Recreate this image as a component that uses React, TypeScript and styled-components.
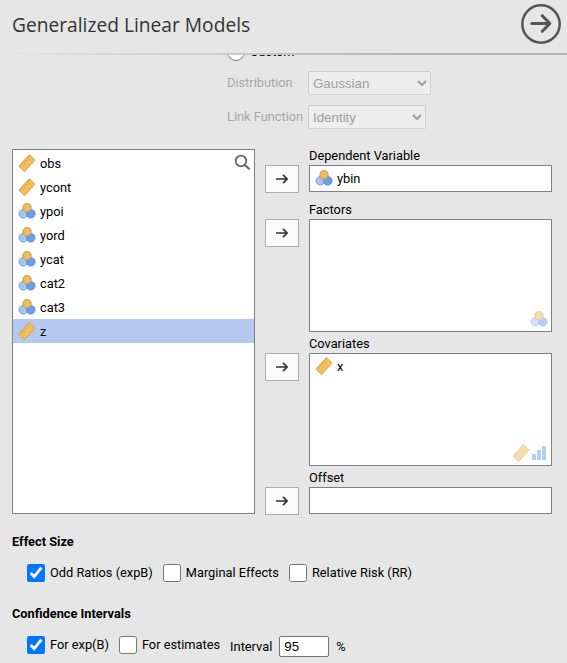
import React from 'react';
import styled, { createGlobalStyle } from 'styled-components';

const GlobalStyle = createGlobalStyle`
  *, *::before, *::after { box-sizing: border-box; }
  body {
    margin: 0;
    background: #e6e6e6;
    color: #000;
    font: 12.8px/16px Roboto, sans-serif;
    overflow: hidden;
  }
`;

const Panel = styled.main`
  width: 567px;
  height: 663px;
  display: flex;
  flex-direction: column;
  overflow: hidden;
  background: #e6e6e6;
`;

const Header = styled.header`
  flex: none;
  height: 53px;
  padding: 0 6px 0 12px;
  display: flex;
  justify-content: space-between;
`;

const Title = styled.h1`
  margin: 11px 0 0;
  font: 400 19.2px/27px 'Open Sans', sans-serif;
  color: #333;
`;

const CloseButton = styled.button`
  margin: 4px 0 0;
  width: 40px;
  height: 40px;
  padding: 0;
  border: 0;
  background: none;
  svg { display: block; }
`;

const Rule = styled.div`
  flex: none;
  height: 2px;
  background: linear-gradient(to right, #e6e6e6 0, #b3b3b3 75%, #b3b3b3 100%);
`;

const Body = styled.div`
  flex: 1;
  min-height: 0;
  overflow: hidden;
  display: flex;
  flex-direction: column;
`;

const ModelOptions = styled.section`
  flex: none;
  height: 94px;
  margin-left: 227px;
  display: flex;
  flex-direction: column;
`;

const CustomOption = styled.label`
  flex: none;
  display: flex;
  gap: 5px;
  height: 18px;
  margin-top: -12px;
  line-height: 18px;
  input { width: 18px; height: 18px; margin: 0; }
`;

const SelectRow = styled.div<{ $top: number }>`
  display: grid;
  grid-template-columns: 81px auto;
  justify-content: start;
  align-items: center;
  height: 24px;
  margin-top: ${p => p.$top}px;
  color: #a8a8a8;
`;

const Select = styled.select<{ $width: number }>`
  width: ${p => p.$width}px;
  height: 24px;
  font: 13.333px 'Liberation Sans', Arial, sans-serif;
`;

const Supplier = styled.section`
  flex: none;
  display: grid;
  grid-template-columns: 243px 297px;
  height: 365px;
  margin-left: 12px;
  & > :last-child { padding-left: 10px; }
`;

const box = `
  background: #fff;
  border: 1px solid #808080;
`;

const VariableList = styled.div`
  ${box}
  display: grid;
  grid-template-columns: 1fr;
  align-content: start;
  padding-top: 1px;
  position: relative;
`;

const SearchIcon = styled.svg`
  position: absolute;
  right: 3px;
  top: 4px;
`;

const Item = styled.div<{ $selected?: boolean }>`
  display: flex;
  align-items: center;
  gap: 4px;
  height: 24px;
  padding-left: 5px;
  background: ${p => (p.$selected ? '#b3c9f0' : 'transparent')};
`;

const ItemName = styled.span`
  padding-top: 2px;
`;

const Targets = styled.div`
  display: flex;
  flex-direction: column;
  justify-content: space-between;
`;

const Target = styled.div<{ $height: number; $gap: number }>`
  display: grid;
  grid-template-columns: 34px 243px;
  grid-template-rows: 16px ${p => p.$height}px;
  column-gap: 10px;
  margin-bottom: ${p => p.$gap}px;
`;

const TargetLabel = styled.div`
  grid-column: 2;
  line-height: 14px;
`;

const TargetButton = styled.button`
  width: 34px;
  height: 28px;
  padding: 0;
  display: grid;
  place-items: center;
  border: 1px solid #acacac;
  background: #fafafa;
`;

const TargetBox = styled.div`
  ${box}
  position: relative;
`;

const Permitted = styled.div`
  position: absolute;
  right: 3px;
  bottom: 2px;
  display: flex;
  opacity: 0.5;
`;

const Heading = styled.h2<{ $top: number }>`
  margin: ${p => p.$top}px 0 0 12px;
  flex: none;
  font-size: 12.8px;
  font-weight: 700;
  line-height: 16px;
`;

const Options = styled.div`
  flex: none;
  display: flex;
  align-items: center;
  height: 22px;
  margin: 12px 0 0 27px;
`;

const Check = styled.label`
  display: flex;
  align-items: center;
  gap: 5px;
  margin-right: 10px;
  white-space: nowrap;
  input { width: 18px; height: 18px; margin: 0; }
`;

const Interval = styled.label`
  display: flex;
  align-items: center;
  gap: 7px;
  padding-top: 3px;
  input {
    width: 50px;
    height: 21px;
    margin: 0;
    padding: 0 4px;
    border: 1px solid #767676;
    border-radius: 2px;
    background: #fff;
    font: 13.333px 'Liberation Sans', Arial, sans-serif;
  }
`;

const Ruler = () => (
  <svg width="18" height="20" viewBox="0 0 18 20">
    <path d="M11.4 1.6 17 7.2 6.4 18.6 1.1 13Z" fill="#f3bf61" stroke="#dda038" strokeLinejoin="round" />
    <path d="m3.2 10.8 1.6 1.6M5.1 8.7l2.4 2.4M7.1 6.5l1.6 1.6M9.1 4.3l2.4 2.4" stroke="#d99b34" fill="none" />
  </svg>
);

const Nominal = () => (
  <svg width="18" height="20" viewBox="0 0 18 20">
    <circle cx="5.3" cy="12.8" r="4.3" fill="#a7c4f3" stroke="#74a3ea" />
    <circle cx="12.8" cy="12.8" r="4.3" fill="#6a9eec" stroke="#5a91e4" />
    <circle cx="9" cy="6.7" r="4.1" fill="#f0bc62" stroke="#d29a3e" />
  </svg>
);

const Bars = () => (
  <svg width="18" height="20" viewBox="0 0 18 20">
    <path d="M2 11h4v6H2zM7 7h4v10H7zM12 3h4v14h-4z" fill="#6a9eec" />
  </svg>
);

const Arrow = () => (
  <svg width="14" height="12" viewBox="0 0 14 12">
    <path d="M1 6h11M8 1.8 12.1 6 8 10.2" fill="none" stroke="#333" strokeWidth="1.7" />
  </svg>
);

type Kind = 'scale' | 'nominal';

const Variable = ({ name, kind, selected }: { name: string; kind: Kind; selected?: boolean }) => (
  <Item $selected={selected}>
    {kind === 'scale' ? <Ruler /> : <Nominal />}
    <ItemName>{name}</ItemName>
  </Item>
);

const variables: { name: string; kind: Kind }[] = [
  { name: 'obs', kind: 'scale' },
  { name: 'ycont', kind: 'scale' },
  { name: 'ypoi', kind: 'nominal' },
  { name: 'yord', kind: 'nominal' },
  { name: 'ycat', kind: 'nominal' },
  { name: 'cat2', kind: 'nominal' },
  { name: 'cat3', kind: 'nominal' },
  { name: 'z', kind: 'scale' },
];

const TargetField = ({ label, height, gap, children }: {
  label: string; height: number; gap: number; children?: React.ReactNode;
}) => (
  <Target $height={height} $gap={gap}>
    <TargetLabel>{label}</TargetLabel>
    <TargetButton aria-label={`Move to ${label}`}><Arrow /></TargetButton>
    <TargetBox>{children}</TargetBox>
  </Target>
);

const CheckOption = ({ label, checked = false }: { label: string; checked?: boolean }) => (
  <Check><input type="checkbox" defaultChecked={checked} />{label}</Check>
);

export default function App() {
  return (
    <>
      <GlobalStyle />
      <Panel>
        <Header>
          <Title>Generalized Linear Models</Title>
          <CloseButton aria-label="Close options">
            <svg width="40" height="40" viewBox="0 0 40 40" fill="none" stroke="#555">
              <circle cx="20" cy="20" r="18.7" strokeWidth="2.5" />
              <path d="M10.8 19.5h17.8M21.3 11.7l7.6 7.8-7.6 7.8" strokeWidth="3" strokeLinecap="round" strokeLinejoin="round" />
            </svg>
          </CloseButton>
        </Header>
        <Rule />
        <Body>
          <ModelOptions>
            <CustomOption><input type="radio" />Custom</CustomOption>
            <SelectRow $top={10}>
              Distribution
              <Select $width={123} disabled><option>Gaussian</option></Select>
            </SelectRow>
            <SelectRow $top={10}>
              Link Function
              <Select $width={118} disabled><option>Identity</option></Select>
            </SelectRow>
          </ModelOptions>
          <Supplier>
            <VariableList>
              {variables.map(v => (
                <Variable key={v.name} name={v.name} kind={v.kind} selected={v.name === 'z'} />
              ))}
              <SearchIcon width="17" height="17" viewBox="0 0 17 17" fill="none" stroke="#666">
                <circle cx="7" cy="7" r="5.3" strokeWidth="1.8" />
                <path d="m10.8 10.8 4.7 4.4" strokeWidth="2.2" />
              </SearchIcon>
            </VariableList>
            <Targets>
              <TargetField label="Dependent Variable" height={27} gap={11}>
                <Variable name="ybin" kind="nominal" />
              </TargetField>
              <TargetField label="Factors" height={113} gap={5}>
                <Permitted><Nominal /></Permitted>
              </TargetField>
              <TargetField label="Covariates" height={113} gap={5}>
                <Variable name="x" kind="scale" />
                <Permitted><Ruler /><Bars /></Permitted>
              </TargetField>
              <TargetField label="Offset" height={27} gap={0} />
            </Targets>
          </Supplier>
          <Heading $top={20}>Effect Size</Heading>
          <Options>
            <CheckOption label="Odd Ratios (expB)" checked />
            <CheckOption label="Marginal Effects" />
            <CheckOption label="Relative Risk (RR)" />
          </Options>
          <Heading $top={22}>Confidence Intervals</Heading>
          <Options>
            <CheckOption label="For exp(B)" checked />
            <CheckOption label="For estimates" />
            <Interval>Interval<input defaultValue="95" /><span>%</span></Interval>
          </Options>
        </Body>
      </Panel>
    </>
  );
}
